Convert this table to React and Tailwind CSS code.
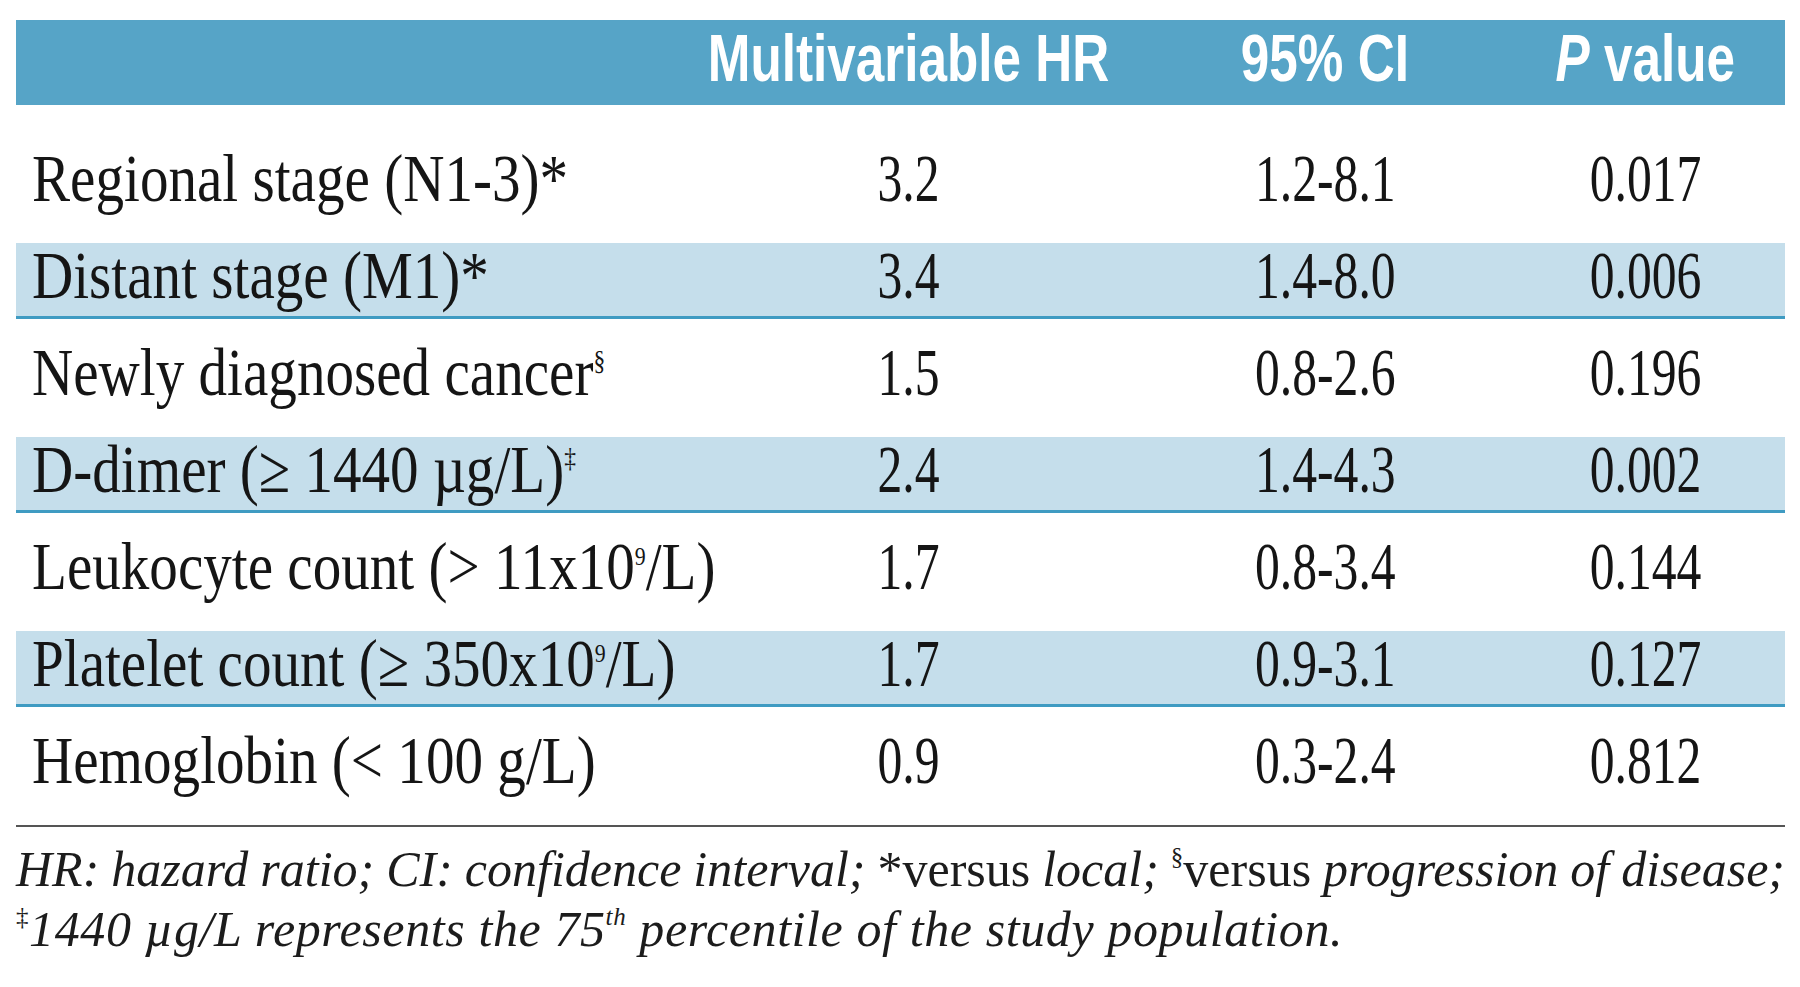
import React from "react";

const rows = [
  { label: <>Regional stage (N1-3)*</>, hr: "3.2", ci: "1.2-8.1", p: "0.017", shaded: false },
  { label: <>Distant stage (M1)*</>, hr: "3.4", ci: "1.4-8.0", p: "0.006", shaded: true },
  {
    label: (
      <>
        Newly diagnosed cancer<sup className="text-[28px] top-[-25px]">§</sup>
      </>
    ),
    hr: "1.5",
    ci: "0.8-2.6",
    p: "0.196",
    shaded: false,
  },
  {
    label: (
      <>
        D-dimer (≥ 1440 µg/L)<sup className="text-[28px] top-[-25px]">‡</sup>
      </>
    ),
    hr: "2.4",
    ci: "1.4-4.3",
    p: "0.002",
    shaded: true,
  },
  {
    label: (
      <>
        Leukocyte count (&gt; 11x10<sup className="text-[26px] top-[-24px]">9</sup>/L)
      </>
    ),
    hr: "1.7",
    ci: "0.8-3.4",
    p: "0.144",
    shaded: false,
  },
  {
    label: (
      <>
        Platelet count (≥ 350x10<sup className="text-[26px] top-[-24px]">9</sup>/L)
      </>
    ),
    hr: "1.7",
    ci: "0.9-3.1",
    p: "0.127",
    shaded: true,
  },
  { label: <>Hemoglobin (&lt; 100 g/L)</>, hr: "0.9", ci: "0.3-2.4", p: "0.812", shaded: false },
];

const cols = "grid grid-cols-[655px_474px_360px_280px]";

const NumCell = ({ children }) => (
  <div className="flex justify-center">
    <span className="inline-block scale-x-[0.73] origin-center whitespace-nowrap">{children}</span>
  </div>
);

const HeadCell = ({ children }) => (
  <div className="flex justify-center">
    <span className="inline-block scale-x-[0.765] origin-center whitespace-nowrap">{children}</span>
  </div>
);

export default function App() {
  return (
    <div className="w-[1800px] h-[987px] bg-white pt-[20px] pl-[16px] pr-[15px] overflow-hidden">
      {/* header */}
      <div
        className={`${cols} h-[85px] pb-[10px] items-center bg-[#56a4c7] text-white font-bold text-[67px] leading-none font-['Liberation_Sans',Arial,sans-serif]`}
      >
        <div />
        <HeadCell>Multivariable HR</HeadCell>
        <HeadCell>95% CI</HeadCell>
        <HeadCell>
          <i>P</i> value
        </HeadCell>
      </div>

      {/* rows */}
      <div className="mt-[41px] flex flex-col gap-[21px] text-[68px] leading-[64px] text-[#151515] font-['Liberation_Serif','Times_New_Roman',serif]">
        {rows.map((r, i) => (
          <div
            key={i}
            className={`${cols} h-[76px] border-b-[3px] ${
              r.shaded ? "bg-[#c5deeb] border-[#3f9bc2]" : "border-transparent"
            }`}
          >
            <div className="pl-[16px]">
              <span className="inline-block scale-x-[0.84] origin-left whitespace-nowrap">{r.label}</span>
            </div>
            <NumCell>{r.hr}</NumCell>
            <NumCell>{r.ci}</NumCell>
            <NumCell>{r.p}</NumCell>
          </div>
        ))}
      </div>

      <div className="mt-[21px] h-[2px] bg-[#555555]" />

      {/* footnote */}
      <div className="mt-[12px] text-[50px] leading-[60px] text-[#1c1c1c] font-['Liberation_Serif','Times_New_Roman',serif]">
        <div className="whitespace-nowrap flex justify-between">
          <i>HR:</i>
          <i>hazard</i>
          <i>ratio;</i>
          <i>CI:</i>
          <i>confidence</i>
          <i>interval;</i>
          <span>*versus</span>
          <i>local;</i>
          <span>
            <sup className="text-[25px] top-[-21px]">§</sup>versus
          </span>
          <i>progression</i>
          <i>of</i>
          <i>disease;</i>
        </div>
        <div className="whitespace-nowrap tracking-[0.6px]">
          <sup className="text-[25px] top-[-21px]">‡</sup>
          <i>
            1440 µg/L represents the 75<sup className="text-[25px] top-[-21px]">th</sup> percentile of the study
            population.
          </i>
        </div>
      </div>
    </div>
  );
}
